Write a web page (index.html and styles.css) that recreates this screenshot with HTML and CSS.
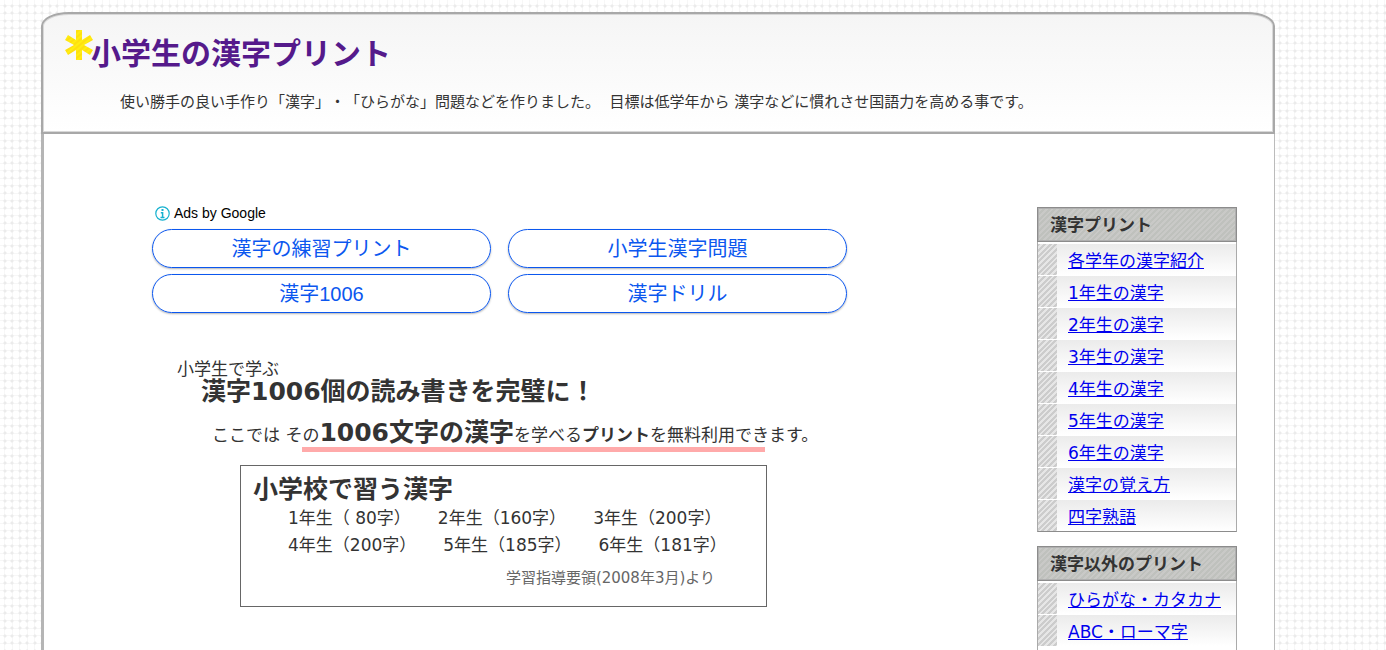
FILE: index.html
```html
<!DOCTYPE html>
<html lang="ja">
<head>
<meta charset="utf-8">
<title>小学生の漢字プリント</title>
<link rel="stylesheet" href="styles.css">
</head>
<body>
<div class="page">
  <header class="header">
    <h1 class="title">
      <svg class="star" viewBox="0 0 28 30" aria-hidden="true">
        <defs><pattern id="hatch" width="4" height="4" patternUnits="userSpaceOnUse" patternTransform="rotate(50)"><rect width="4" height="4" fill="#ffee10"/><rect width="2" height="4" fill="#ffdf10"/></pattern></defs>
        <path d="M11 0h6v10l8-5 3 5-9 5 9 5-3 5-8-5v10h-6V20l-8 5-3-5 9-5-9-5 3-5 8 5z" fill="url(#hatch)"/>
      </svg>
      <a href="#">小学生の漢字プリント</a>
    </h1>
    <p class="tagline">使い勝手の良い手作り「漢字」・「ひらがな」問題などを作りました。&nbsp; 目標は低学年から 漢字などに慣れさせ国語力を高める事です。</p>
  </header>
  <div class="content">
    <main class="main">
      <section class="ads">
        <p class="ads-label">
          <svg class="info" viewBox="0 0 15 15" aria-hidden="true"><circle cx="7.5" cy="7.5" r="6.7" fill="none" stroke="#15b1cf" stroke-width="1.2"/><rect x="6.5" y="3" width="2" height="2" fill="#15b1cf"/><path d="M5.8 6.7h1.8v5M5.5 11.5h4" fill="none" stroke="#15b1cf" stroke-width="1.5"/></svg>
          Ads by Google
        </p>
        <div class="ads-grid">
          <a class="pill" href="#">漢字の練習プリント</a>
          <a class="pill" href="#">小学生漢字問題</a>
          <a class="pill" href="#">漢字1006</a>
          <a class="pill" href="#">漢字ドリル</a>
        </div>
      </section>
      <section class="intro">
        <p class="kicker">小学生で学ぶ</p>
        <h2 class="headline">漢字1006個の読み書きを完璧に！</h2>
        <p class="lead">ここでは その<strong class="big">1006文字の漢字</strong>を学べる<strong>プリント</strong>を無料利用できます。</p>
        <div class="marker"></div>
      </section>
      <section class="box">
        <h2 class="box-title">小学校で習う漢字</h2>
        <p class="grades"><span>1年生（ 80字）</span><span>2年生（160字）</span><span>3年生（200字）</span></p>
        <p class="grades"><span>4年生（200字）</span><span>5年生（185字）</span><span>6年生（181字）</span></p>
        <p class="source">学習指導要領(2008年3月)より</p>
      </section>
    </main>
    <aside class="side">
      <nav class="menu">
        <h2 class="menu-title">漢字プリント</h2>
        <ul class="menu-list">
          <li><a href="#">各学年の漢字紹介</a></li>
          <li><a href="#">1年生の漢字</a></li>
          <li><a href="#">2年生の漢字</a></li>
          <li><a href="#">3年生の漢字</a></li>
          <li><a href="#">4年生の漢字</a></li>
          <li><a href="#">5年生の漢字</a></li>
          <li><a href="#">6年生の漢字</a></li>
          <li><a href="#">漢字の覚え方</a></li>
          <li><a href="#">四字熟語</a></li>
        </ul>
      </nav>
      <nav class="menu">
        <h2 class="menu-title">漢字以外のプリント</h2>
        <ul class="menu-list open">
          <li><a href="#">ひらがな・カタカナ</a></li>
          <li><a href="#">ABC・ローマ字</a></li>
        </ul>
      </nav>
    </aside>
  </div>
</div>
</body>
</html>
```
FILE: styles.css
```css
* { box-sizing: border-box; }
body {
  margin: 0;
  color: #333;
  font-family: "DejaVu Sans", "Noto Sans CJK JP", sans-serif;
  font-size: 17px;
  text-spacing-trim: space-all;
  background-color: #fff;
  background-image:
    radial-gradient(circle at 5px 6px, #ebebeb 0 1px, transparent 2px),
    radial-gradient(circle at 12px 6px, #ebebeb 0 1px, transparent 2px),
    radial-gradient(circle at 5px 13px, #ebebeb 0 1px, transparent 2px),
    radial-gradient(circle at 12px 13px, #ebebeb 0 1px, transparent 2px),
    linear-gradient(90deg, transparent 4px, #f7f7f7 4px 5px, transparent 5px 12px, #f7f7f7 12px 13px, transparent 13px),
    linear-gradient(transparent 5px, #f7f7f7 5px 6px, transparent 6px 13px, #f7f7f7 13px 14px, transparent 14px);
  background-size: 15px 15px;
}
h1, h2, p, ul { margin: 0; padding: 0; }
ul { list-style: none; }
.page {
  display: flex;
  flex-direction: column;
  min-height: 100vh;
  margin: 0 111px 0 41px;
  padding-top: 12px;
}
.header {
  padding: 16px 22px 19px;
  border: 2px solid #a8a8a8;
  border-radius: 28px 28px 0 0 / 14px 14px 0 0;
  box-shadow: inset 0 0 0 1px #d8d8d8;
  background: linear-gradient(#f5f5f5, #fff);
}
.title { display: flex; align-items: flex-start; font-size: 30px; line-height: 48px; }
.title a { color: #551a8b; text-decoration: none; margin-left: -2px; }
.star { width: 28px; height: 30px; flex: none; }
.tagline { padding: 13px 0 0 55px; font-size: 15px; line-height: 22px; white-space: nowrap; }
.content {
  flex: 1;
  display: flex;
  justify-content: space-between;
  padding: 73px 37px 0 108px;
  border-left: 3px solid #b5b5b5;
  border-right: 1px solid #bbb;
  background: #fff;
}
.main { width: 695px; }
.ads { font-family: "Liberation Sans", "Noto Sans CJK JP", sans-serif; }
.ads-label { display: flex; align-items: center; gap: 4px; height: 12px; padding-left: 3px; color: #000; font-size: 14px; }
.info { width: 15px; height: 15px; }
.ads-grid { display: grid; grid-template-columns: 1fr 1fr; gap: 6px 17px; margin-top: 10px; }
.pill {
  padding-top: 1px;
  border: 1px solid #0b57ef;
  border-radius: 20px;
  box-shadow: 0 1px 2px rgba(0, 0, 0, .3);
  color: #0b57ef;
  font-size: 20px;
  line-height: 36px;
  text-align: center;
  text-decoration: none;
}
.intro { padding: 46px 0 0 25px; }
.kicker { line-height: 20px; }
.headline { padding-left: 24px; font-size: 25px; line-height: 26px; }
.lead { padding: 16px 0 0 35px; line-height: 24px; white-space: nowrap; }
.big { font-size: 25px; }
.marker { width: 463px; height: 5px; margin: 0 0 0 125px; background: #ffaaaa; }
.box { width: 527px; margin: 13px 0 0 88px; padding: 9px 12px 18px; border: 1px solid #666; }
.box-title { font-size: 25px; line-height: 30px; }
.grades { display: flex; gap: 27px; padding-left: 35px; line-height: 27px; white-space: nowrap; }
.source { padding: 9px 39px 0 0; color: #666; font-size: 15px; line-height: 20px; text-align: right; }
.side { display: flex; flex-direction: column; gap: 14px; width: 200px; }
.menu:last-child { flex: 1; display: flex; flex-direction: column; }
.menu-title {
  padding: 1px 0 0 12px;
  border: 1px solid #8c8c8c;
  box-shadow: inset 0 0 0 1px #b0b0b0;
  background: repeating-linear-gradient(135deg, #bfc1bd 0 2px, #c9c9c7 2px 4px);
  font-size: 17px;
  line-height: 32px;
}
.menu-list { padding-top: 2px; border: 1px solid #aaa; border-top: 0; border-bottom-color: #8c8c8c; }
.menu-list li {
  padding: 4px 0 0 30px;
  line-height: 27px;
  border-bottom: 1px solid #fff;
  background:
    repeating-linear-gradient(135deg, #ccc 0 2px, #e6e6e6 2px 4px) 0 0 / 19px 100% no-repeat,
    linear-gradient(#ebebeb, #fff);
}
.menu-list li:last-child { border-bottom: 0; }
.open { flex: 1; border-bottom: 0; }
.menu-list a { color: #0000ee; }
```
